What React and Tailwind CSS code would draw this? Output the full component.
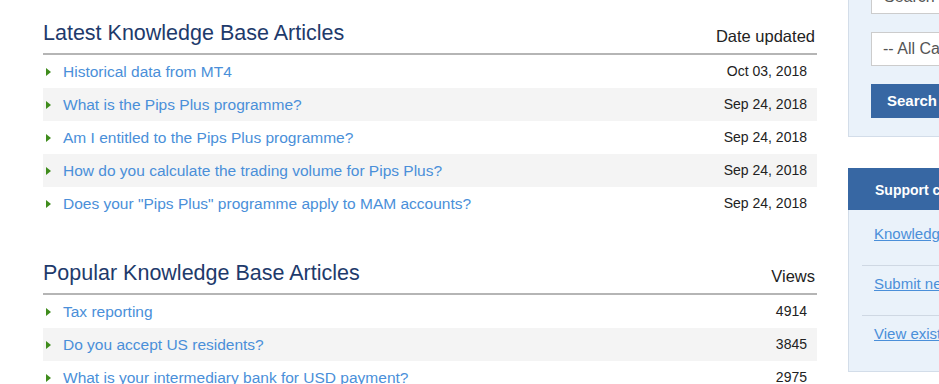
import React from "react";

const latest = [
  { title: "Historical data from MT4", date: "Oct 03, 2018" },
  { title: "What is the Pips Plus programme?", date: "Sep 24, 2018" },
  { title: "Am I entitled to the Pips Plus programme?", date: "Sep 24, 2018" },
  { title: "How do you calculate the trading volume for Pips Plus?", date: "Sep 24, 2018" },
  { title: 'Does your "Pips Plus" programme apply to MAM accounts?', date: "Sep 24, 2018" },
];

const popular = [
  { title: "Tax reporting", date: "4914" },
  { title: "Do you accept US residents?", date: "3845" },
  { title: "What is your intermediary bank for USD payment?", date: "2975" },
  { title: "How do I withdraw funds?", date: "2810" },
];

const ArticleTable = ({ heading, column, rows, className = "" }) => (
  <div className={className}>
    <div className="h-[55px] flex items-end justify-between pb-[7px] pr-[2px] border-b-2 border-[#b5b5b5]">
      <h2 className="text-[21.5px] leading-[26px] text-[#1e3a6b]">{heading}</h2>
      <span className="text-[16.5px] leading-[20px] text-[#222]">{column}</span>
    </div>
    {rows.map((row, i) => (
      <div
        key={row.title}
        className={`h-[33px] flex items-center pl-[3px] pr-[10px] ${i % 2 === 1 ? "bg-[#f4f4f4]" : ""}`}
      >
        <span className="w-0 h-0 border-y-[4px] border-y-transparent border-l-[5px] border-l-[#3f8c1c] mr-[12px]" />
        <a href="#" className="flex-1 text-[15.5px] leading-[18px] text-[#4a8fd9]">
          {row.title}
        </a>
        <span className="text-[14px] leading-[17px] text-[#222]">{row.date}</span>
      </div>
    ))}
  </div>
);

const supportLinks = ["Knowledge Base", "Submit new ticket", "View existing tickets"];

export default function App() {
  return (
    <div className="w-[939px] h-[384px] overflow-hidden bg-white font-['Liberation_Sans',Arial,sans-serif]">
      <div className="flex gap-[31px] pl-[43px]">
        <div className="w-[774px] shrink-0">
          <ArticleTable heading="Latest Knowledge Base Articles" column="Date updated" rows={latest} />
          <ArticleTable
            heading="Popular Knowledge Base Articles"
            column="Views"
            rows={popular}
            className="mt-[20px]"
          />
        </div>

        <div className="w-[262px] shrink-0 -mt-[40px]">
          <div className="border border-[#d3dde9] bg-[#eaf2fa] pt-[19px] pb-[18px] px-[22px] flex flex-col gap-[18px]">
            <input
              placeholder="Search Knowledge Base"
              className="h-[34px] bg-white border border-[#cccccc] px-[12px] text-[16px] text-[#555] placeholder:text-[#555] outline-none"
            />
            <div className="h-[34px] bg-white border border-[#cccccc] px-[11px] flex items-center text-[16px] text-[#555] whitespace-nowrap">
              -- All Categories --
            </div>
            <button className="h-[34px] w-[120px] bg-[#3767a3] text-white text-[15px] text-left pl-[16px] font-bold">
              Search
            </button>
          </div>

          <div className="mt-[31px] border border-[#d3dde9] bg-[#eaf2fa]">
            <div className="h-[42px] -mx-px -mt-px bg-[#3767a3] flex items-center pl-[27px] pt-[2px] text-white text-[14px] font-bold whitespace-nowrap">
              Support center
            </div>
            <div className="pt-[6px] pb-[5px] px-[13px]">
              {supportLinks.map((link, i) => (
                <div
                  key={link}
                  className={`h-[50px] pt-[6px] pl-[12px] ${i < supportLinks.length - 1 ? "border-b border-[#cfd8e3]" : ""}`}
                >
                  <a href="#" className="text-[15px] leading-[18px] text-[#4a8fd9] underline whitespace-nowrap">
                    {link}
                  </a>
                </div>
              ))}
            </div>
          </div>
        </div>
      </div>
    </div>
  );
}
